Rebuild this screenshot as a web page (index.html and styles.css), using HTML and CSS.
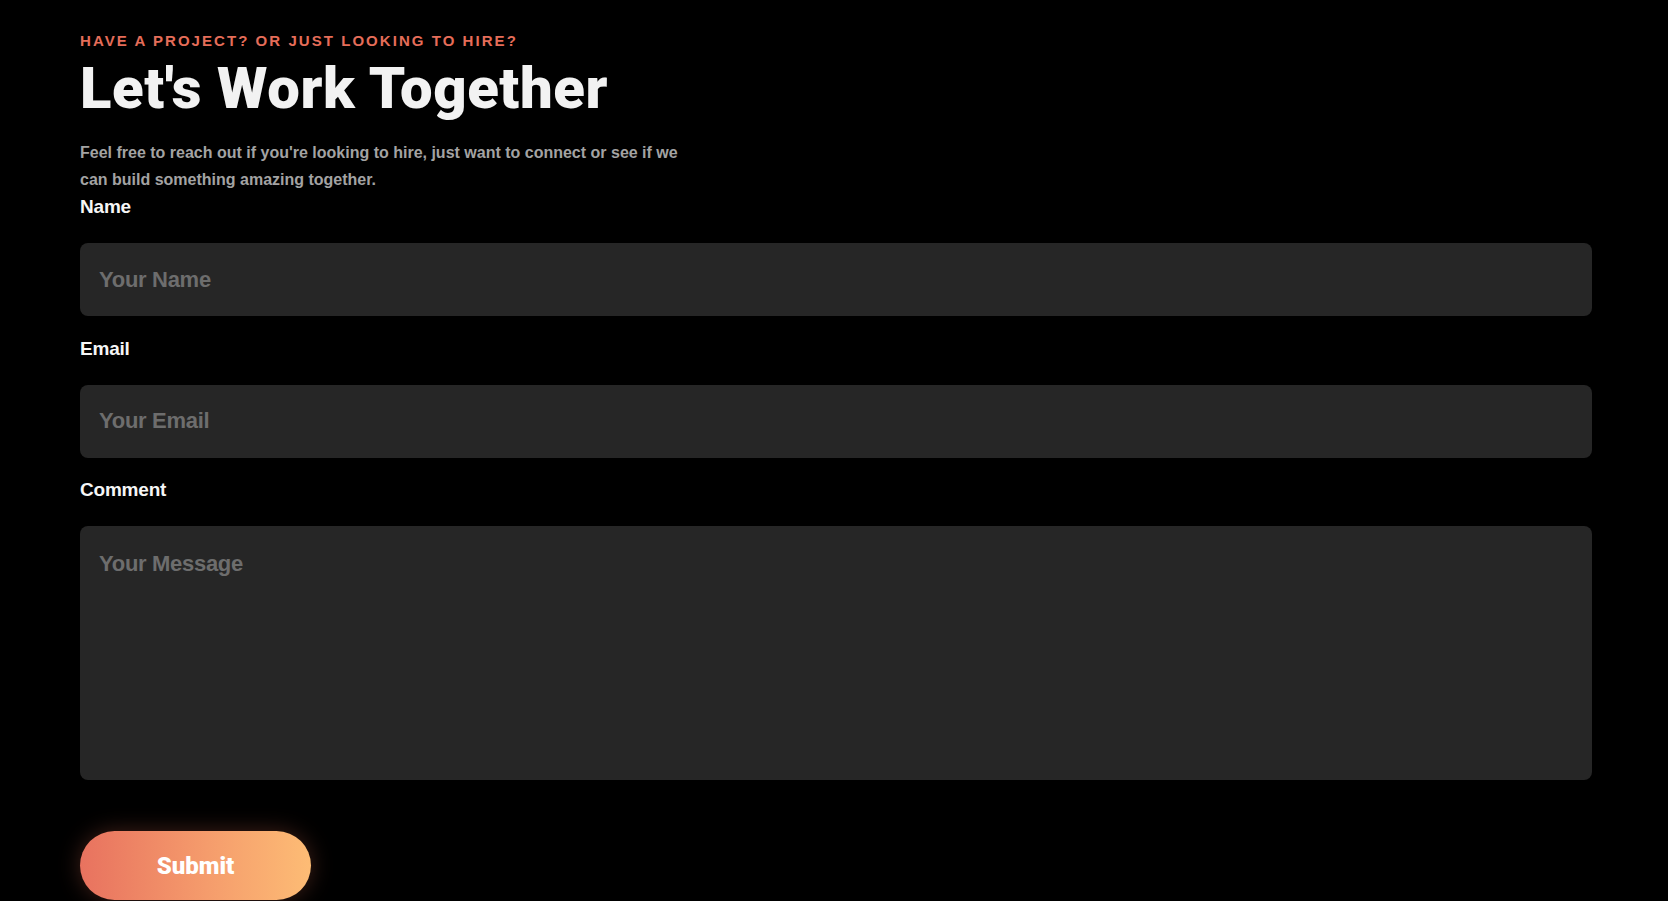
FILE: index.html
```html
<!DOCTYPE html>
<html lang="en">
<head>
<meta charset="utf-8">
<title>Let's Work Together</title>
<link rel="stylesheet" href="styles.css">
</head>
<body>
<main class="contact">
  <p class="eyebrow">Have a project? Or just looking to hire?</p>
  <h1 class="title">Let's Work Together</h1>
  <p class="intro">Feel free to reach out if you're looking to hire, just want to connect or see if we can build something amazing together.</p>
  <form class="form">
    <label class="label" for="name">Name</label>
    <input class="field" id="name" type="text" placeholder="Your Name">
    <label class="label" for="email">Email</label>
    <input class="field" id="email" type="email" placeholder="Your Email">
    <label class="label" for="comment">Comment</label>
    <textarea class="field area" id="comment" placeholder="Your Message"></textarea>
    <button class="submit" type="button">Submit</button>
  </form>
</main>
</body>
</html>
```
FILE: styles.css
```css
html, body {
  margin: 0;
  padding: 0;
  background: #000;
  height: 100%;
  overflow: hidden;
}
body {
  font-family: "Liberation Sans", Arial, sans-serif;
  color: #f4f4f4;
}
.contact {
  margin-left: 80px;
  width: 1512px;
  padding-top: 31px;
  display: flex;
  flex-direction: column;
}
.eyebrow {
  margin: 0;
  font-size: 15px;
  line-height: 20px;
  font-weight: 700;
  letter-spacing: 2.05px;
  text-transform: uppercase;
  color: #e56d59;
}
.title {
  margin: 5px 0 0;
  font-family: Roboto, "Liberation Sans", sans-serif;
  font-size: 58px;
  line-height: 64px;
  font-weight: 900;
  letter-spacing: 0.6px;
  color: #f2f2f2;
}
.intro {
  margin: 19px 0 0;
  width: 600px;
  font-size: 16px;
  line-height: 27px;
  font-weight: 700;
  color: #a3a3a3;
}
.form {
  display: flex;
  flex-direction: column;
  margin-top: 2px;
}
.label {
  font-size: 19px;
  line-height: 24px;
  font-weight: 700;
  letter-spacing: -0.2px;
  color: #f6f6f6;
  margin-bottom: 24px;
}
.field {
  box-sizing: border-box;
  width: 100%;
  height: 73px;
  margin: 0 0 20.5px;
  padding: 0 19px;
  border: none;
  border-radius: 8px;
  background: #262626;
  color: #e0e0e0;
  font-family: inherit;
  font-size: 22px;
  font-weight: 700;
  letter-spacing: -0.3px;
  outline: none;
}
.field::placeholder {
  color: #6d6d6d;
  opacity: 1;
}
.area {
  height: 254px;
  padding: 21px 19px;
  line-height: 1.5;
  resize: none;
  margin-bottom: 51px;
}
.submit {
  align-self: flex-start;
  width: 231px;
  height: 69px;
  border: none;
  border-radius: 35px;
  background: linear-gradient(90deg, #e8725f 0%, #f59c6c 55%, #fdbc75 100%);
  box-shadow: 0 0 22px rgba(235, 120, 90, 0.28);
  color: #fff;
  font-family: Roboto, "Liberation Sans", sans-serif;
  font-size: 24px;
  font-weight: 900;
  cursor: pointer;
}
```
